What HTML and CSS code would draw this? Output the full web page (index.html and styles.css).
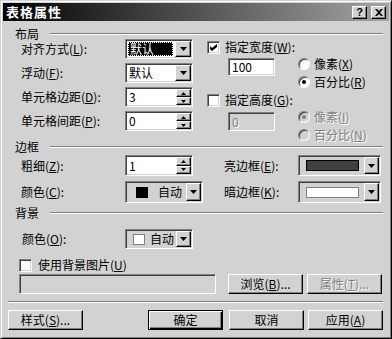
FILE: index.html
```html
<!DOCTYPE html>
<html lang="zh-CN">
<head>
  <meta charset="UTF-8">
  <meta name="viewport" content="width=device-width, initial-scale=1.0">
  <title>表格属性</title>
  <link rel="stylesheet" href="styles.css">
</head>
<body>

  <div class="dialog">
    <div class="titlebar">
      <span class="title">表格属性</span>
      <div class="caption-btns">
        <span class="cap-btn raised">?</span>
        <span class="cap-btn raised">
          <svg width="8" height="7" viewBox="0 0 8 7"><path d="M0 0h2l2 2 2-2h2L5 3.5 8 7H6L4 5 2 7H0l3-3.5z" fill="#000"/></svg>
        </span>
      </div>
    </div>

    <div class="content">
      <!-- 布局 -->
      <div class="group-head">布局</div>
      <div class="layout">
        <div class="form-grid">
          <span>对齐方式(<u>L</u>):</span>
          <div class="combo sunken focus">
            <span class="combo-text"><span class="sel">默认</span></span>
            <span class="drop raised"><svg width="7" height="4" viewBox="0 0 7 4"><path d="M0 0h7L3.5 4z"/></svg></span>
          </div>

          <span>浮动(<u>F</u>):</span>
          <div class="combo sunken">
            <span class="combo-text">默认</span>
            <span class="drop raised"><svg width="7" height="4" viewBox="0 0 7 4"><path d="M0 0h7L3.5 4z"/></svg></span>
          </div>

          <span>单元格边距(<u>D</u>):</span>
          <div class="spin sunken">
            <span class="val">3</span>
            <span class="spin-btns">
              <span class="raised"><svg width="5" height="3" viewBox="0 0 5 3"><path d="M2.5 0L5 3H0z"/></svg></span>
              <span class="raised"><svg width="5" height="3" viewBox="0 0 5 3"><path d="M0 0h5L2.5 3z"/></svg></span>
            </span>
          </div>

          <span>单元格间距(<u>P</u>):</span>
          <div class="spin sunken">
            <span class="val">0</span>
            <span class="spin-btns">
              <span class="raised"><svg width="5" height="3" viewBox="0 0 5 3"><path d="M2.5 0L5 3H0z"/></svg></span>
              <span class="raised"><svg width="5" height="3" viewBox="0 0 5 3"><path d="M0 0h5L2.5 3z"/></svg></span>
            </span>
          </div>
        </div>

        <div class="right-col">
          <div class="cb-row">
            <span class="check sunken"><svg width="7" height="7" viewBox="0 0 7 7"><path d="M0 2l2 2 5-4v3L2 7 0 5z"/></svg></span>
            <span>指定宽度(<u>W</u>):</span>
          </div>
          <div class="sub">
            <span class="text sunken">100</span>
            <div class="radios">
              <div class="radio-row"><span class="radio"></span><span>像素(<u>X</u>)</span></div>
              <div class="radio-row"><span class="radio on"></span><span>百分比(<u>R</u>)</span></div>
            </div>
          </div>
          <div class="cb-row second">
            <span class="check sunken"></span>
            <span>指定高度(<u>G</u>):</span>
          </div>
          <div class="sub disabled">
            <span class="text sunken">0</span>
            <div class="radios">
              <div class="radio-row"><span class="radio on"></span><span>像素(<u>I</u>)</span></div>
              <div class="radio-row"><span class="radio"></span><span>百分比(<u>N</u>)</span></div>
            </div>
          </div>
        </div>
      </div>

      <!-- 边框 -->
      <div class="group-head border-head">边框</div>
      <div class="border-grid">
        <span>粗细(<u>Z</u>):</span>
        <div class="spin sunken thin">
          <span class="val">1</span>
          <span class="spin-btns">
            <span class="raised"><svg width="5" height="3" viewBox="0 0 5 3"><path d="M2.5 0L5 3H0z"/></svg></span>
            <span class="raised"><svg width="5" height="3" viewBox="0 0 5 3"><path d="M0 0h5L2.5 3z"/></svg></span>
          </span>
        </div>
        <span>亮边框(<u>E</u>):</span>
        <div class="color-combo sunken wide">
          <span class="bar dark"></span>
          <span class="drop raised"><svg width="7" height="4" viewBox="0 0 7 4"><path d="M0 0h7L3.5 4z"/></svg></span>
        </div>

        <span>颜色(<u>C</u>):</span>
        <div class="color-combo sunken auto">
          <span class="swatch black"></span>
          <span class="auto-text">自动</span>
          <span class="drop raised"><svg width="7" height="4" viewBox="0 0 7 4"><path d="M0 0h7L3.5 4z"/></svg></span>
        </div>
        <span>暗边框(<u>K</u>):</span>
        <div class="color-combo sunken wide">
          <span class="bar light"></span>
          <span class="drop raised"><svg width="7" height="4" viewBox="0 0 7 4"><path d="M0 0h7L3.5 4z"/></svg></span>
        </div>
      </div>

      <!-- 背景 -->
      <div class="group-head bg-head">背景</div>
      <div class="bg-row">
        <span class="bg-label">颜色(<u>O</u>):</span>
        <div class="color-combo sunken bg">
          <span class="swatch white"></span>
          <span class="auto-text">自动</span>
          <span class="drop raised"><svg width="7" height="4" viewBox="0 0 7 4"><path d="M0 0h7L3.5 4z"/></svg></span>
        </div>
      </div>
      <div class="bg-check">
        <span class="check sunken"></span>
        <span>使用背景图片(<u>U</u>)</span>
      </div>
      <div class="path-row">
        <span class="path sunken"></span>
        <span class="btn raised browse">浏览(<u>B</u>)...</span>
        <span class="btn raised off">属性(<u>T</u>)...</span>
      </div>

      <div class="sep"></div>

      <div class="buttons">
        <span class="btn raised">样式(<u>S</u>)...</span>
        <div class="btn-group">
          <span class="btn raised default">确定</span>
          <span class="btn raised cancel">取消</span>
          <span class="btn raised apply">应用(<u>A</u>)</span>
        </div>
      </div>
    </div>
  </div>

</body>
</html>
```

FILE: styles.css
```css
body {
  margin: 0;
  background-color: #d2d2d2;
  font-family: "Noto Sans CJK SC", "Liberation Sans", sans-serif;
  font-size: 12px;
  line-height: 14px;
  color: #000;
}

u {
  text-underline-offset: 1px;
}

.dialog {
  width: 392px;
  height: 339px;
  box-sizing: border-box;
  border: 1px solid;
  border-color: #d2d2d2 #000 #000 #d2d2d2;
  box-shadow: inset 1px 1px #fff, inset -1px -1px #808080;
  padding: 2px;
  background-color: #d2d2d2;
}

/* title bar */
.titlebar {
  height: 18px;
  display: flex;
  align-items: center;
  justify-content: space-between;
  padding: 0 3px 0 3px;
  background: linear-gradient(to right, #000 0%, #3a3a3a 35%, #a4a4a4 100%);
}

.title {
  color: #fff;
  font-weight: bold;
  font-size: 13px;
  letter-spacing: 1px;
}

.caption-btns {
  display: flex;
  gap: 4px;
}

.cap-btn {
  width: 15px;
  height: 13px;
  display: flex;
  align-items: center;
  justify-content: center;
  font-family: "Liberation Sans", sans-serif;
  font-weight: bold;
  font-size: 11px;
}

/* 3d borders */
.raised {
  box-sizing: border-box;
  background-color: #d2d2d2;
  border: 1px solid;
  border-color: #fff #000 #000 #fff;
  box-shadow: inset -1px -1px #808080;
}

.sunken {
  box-sizing: border-box;
  background-color: #fff;
  border: 1px solid;
  border-color: #808080 #fff #fff #808080;
  box-shadow: inset 1px 1px #404040, inset -1px -1px #d2d2d2;
}

.content {
  padding: 7px 6px 0 5px;
}

.group-head {
  display: flex;
  align-items: center;
  height: 12px;
  padding-left: 7px;
}

.group-head::after {
  content: "";
  flex: 1;
  margin-left: 11px;
  border-top: 1px solid #808080;
  border-bottom: 1px solid #fff;
}

.border-head {
  margin-top: -3px;
}

.bg-head {
  margin-top: 4px;
}

/* layout section */
.layout {
  display: flex;
  margin-top: -1px;
  padding-left: 13px;
}

.form-grid {
  display: grid;
  grid-template-columns: 104px 68px;
  grid-auto-rows: 20px;
  row-gap: 4px;
  align-items: center;
  align-self: flex-start;
}

.combo,
.spin {
  display: flex;
  height: 20px;
  padding: 1px;
}

.combo-text {
  flex: 1;
  display: flex;
  align-items: center;
  padding-left: 2px;
  white-space: nowrap;
}

.combo.focus .combo-text {
  padding: 1px 2px 1px 1px;
}

.sel {
  flex: 1;
  height: 100%;
  display: flex;
  align-items: center;
  padding-left: 2px;
  background-color: #000;
  color: #fff;
  outline: 1px dotted #fff;
  outline-offset: -1px;
}

.drop {
  width: 16px;
  flex: none;
  display: flex;
  align-items: center;
  justify-content: center;
}

.spin .val {
  flex: 1;
  display: flex;
  align-items: center;
  padding-left: 2px;
}

.spin-btns {
  width: 15px;
  display: flex;
  flex-direction: column;
}

.spin-btns span {
  flex: 1;
  display: flex;
  align-items: center;
  justify-content: center;
}

.right-col {
  margin-left: 14px;
  width: 176px;
}

.cb-row {
  display: flex;
  align-items: center;
  gap: 5px;
  height: 16px;
}

.cb-row.second {
  margin-top: 1px;
}

.check {
  width: 13px;
  height: 13px;
  flex: none;
  display: flex;
  align-items: center;
  justify-content: center;
}

.sub {
  display: flex;
  padding-left: 21px;
}

.text {
  width: 47px;
  height: 18px;
  margin-top: 3px;
  display: flex;
  align-items: center;
  padding-left: 3px;
}

.sub.disabled .text {
  height: 19px;
  margin-top: 4px;
  background-color: #d2d2d2;
}

.radios {
  margin-left: 23px;
}

.radio-row {
  display: flex;
  align-items: center;
  gap: 4px;
  height: 18px;
}

.radio {
  width: 12px;
  height: 12px;
  box-sizing: border-box;
  border-radius: 50%;
  border: 1px solid;
  border-color: #808080 #fff #fff #808080;
  box-shadow: inset 1px 1px #404040;
  background-color: #fff;
  display: flex;
  align-items: center;
  justify-content: center;
}

.radio.on::after {
  content: "";
  width: 4px;
  height: 4px;
  border-radius: 50%;
  background-color: #000;
}

.disabled {
  color: #808080;
  text-shadow: 1px 1px #fff;
}

.disabled .radio {
  background-color: #d2d2d2;
}

.disabled .radio.on::after {
  background-color: #808080;
}

/* border section */
.border-grid {
  display: grid;
  grid-template-columns: 104px 99px 74px 83px;
  grid-template-rows: 21px 22px;
  row-gap: 5px;
  align-items: center;
  padding: 2px 0 0 13px;
}

.spin.thin {
  width: 68px;
  height: 21px;
}

.color-combo {
  display: flex;
  align-items: center;
  height: 100%;
  padding: 1px;
  background-color: #d2d2d2;
}

.color-combo .drop {
  height: 100%;
  width: 15px;
  margin-left: auto;
}

.color-combo.wide {
  width: 83px;
}

.color-combo.auto {
  width: 78px;
}

.bar {
  width: 53px;
  height: 11px;
  margin-left: 6px;
  box-sizing: border-box;
}

.bar.dark {
  background-color: #404040;
  border: 1px solid #000;
}

.bar.light {
  background-color: #fff;
  border: 1px solid #808080;
}

.swatch {
  width: 12px;
  height: 11px;
  flex: none;
  box-sizing: border-box;
  margin-left: 9px;
}

.swatch.black {
  background-color: #000;
}

.swatch.white {
  background-color: #fff;
  border: 1px solid #808080;
  margin-left: 6px;
}

.auto-text {
  margin-left: 10px;
  white-space: nowrap;
}

.color-combo.bg .auto-text {
  margin-left: 5px;
}

/* background section */
.bg-row {
  display: flex;
  align-items: center;
  height: 20px;
  margin-top: 10px;
  padding-left: 14px;
}

.bg-label {
  width: 103px;
}

.color-combo.bg {
  width: 68px;
}

.bg-check {
  display: flex;
  align-items: center;
  gap: 6px;
  height: 16px;
  margin-top: 8px;
  padding-left: 11px;
}

.path-row {
  display: flex;
  height: 20px;
  margin-top: 1px;
  padding-left: 11px;
}

.path {
  width: 197px;
  background-color: #d2d2d2;
}

.btn {
  width: 75px;
  height: 20px;
  display: flex;
  align-items: center;
  justify-content: center;
  white-space: nowrap;
}

.btn.browse {
  margin-left: 12px;
  margin-right: 4px;
}

.btn.off {
  color: #808080;
  text-shadow: 1px 1px #fff;
}

.sep {
  margin-top: 7px;
  border-top: 1px solid #808080;
  border-bottom: 1px solid #fff;
}

.buttons {
  display: flex;
  margin-top: 7px;
}

.btn-group {
  display: flex;
  margin-left: auto;
}

.btn.default {
  border-color: #000;
  box-shadow: inset 1px 1px #fff, inset -1px -1px #000, inset -2px -2px #808080;
}

.btn.cancel {
  margin-left: 6px;
}

.btn.apply {
  margin-left: 4px;
}
```
